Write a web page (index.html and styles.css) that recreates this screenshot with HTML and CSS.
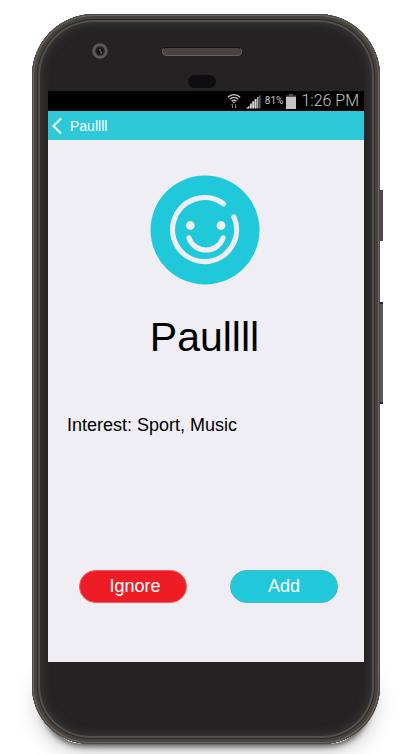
FILE: index.html
```html
<!DOCTYPE html>
<html lang="en">
<head>
<meta charset="utf-8">
<meta name="viewport" content="width=device-width, initial-scale=1">
<title>Paullll</title>
<link rel="stylesheet" href="styles.css">
</head>
<body>
<div class="phone">
  <span class="side-key side-key-power"></span>
  <span class="side-key side-key-volume"></span>
  <div class="bezel-top">
    <div class="hardware">
      <svg class="camera" width="16" height="16" viewBox="0 0 16 16" aria-hidden="true">
        <circle cx="8" cy="8" r="6.3" fill="#252323" stroke="#5a5a5c" stroke-width="3"/>
        <circle cx="8" cy="8" r="2.8" fill="#111"/>
        <path d="M8 6v2M9 8.500v2" stroke="#a5a273" stroke-width="1"/>
      </svg>
      <span class="speaker"></span>
    </div>
    <span class="sensor"></span>
  </div>
  <main class="screen">
    <div class="status">
      <svg width="14" height="16" viewBox="0 0 14 16" aria-hidden="true" fill="none" stroke="#c4c4c4" stroke-width="1.3">
        <path d="M.8 4.300C4.200.6 9.800.6 13.200 4.300M2.700 6.400c2.400-2.600 6.200-2.600 8.600 0M4.600 8.300c1.400-1.400 3.400-1.400 4.800 0"/>
        <circle cx="7" cy="9.500" r=".8" fill="#eee" stroke="none"/>
        <path d="M5.500 15v-4M4.300 12.200l1.200-1.300M8.500 11v4M9.700 13.800l-1.200 1.300" stroke="#777" stroke-width="1"/>
      </svg>
      <svg class="signal" width="15" height="15" viewBox="0 0 15 15" aria-hidden="true">
        <path d="M0 14.500h3.500v-3zM4 14.500h1.800v-5H4zM6.200 14.500h2V7.300h-2zM8.600 14.500h2V5h-2z" fill="#d8d8d8"/>
        <path d="M11 14.500h1.500V3H11z" fill="#aaa"/>
        <path d="M13 14.500h1.700V.5L13 2z" fill="#555"/>
      </svg>
      <span class="percent">81%</span>
      <svg class="battery" width="10" height="15" viewBox="0 0 10 15" aria-hidden="true">
        <path d="M3 0h4v1.500h3V15H0V1.500h3z" fill="#555"/>
        <path d="M0 3h10v12H0z" fill="#c4c4c4"/>
      </svg>
      <time class="clock">1:26 PM</time>
    </div>
    <header class="bar">
      <a class="back" href="#" aria-label="Back">
        <svg width="11" height="18" viewBox="0 0 11 18" aria-hidden="true"><path d="M9 1.500 1.500 9 9 16.500" fill="none" stroke="#fff" stroke-width="2"/></svg>
      </a>
      <span>Paullll</span>
    </header>
    <section class="profile">
      <svg class="avatar" width="110" height="110" viewBox="0 0 110 110" role="img" aria-label="Smiley">
        <circle cx="55" cy="55" r="54.500" fill="#1fc9da"/>
        <g fill="none" stroke="#efeef4" stroke-width="5.200" stroke-linecap="round">
          <path d="M73.500 28.800A32 32 0 1 0 84 42"/>
          <path d="M39 63C44.500 79 67.500 79 73 63"/>
        </g>
        <circle cx="40.300" cy="50.500" r="4.400" fill="#efeef4"/>
        <circle cx="71" cy="50.500" r="4.400" fill="#efeef4"/>
      </svg>
      <h1>Paullll</h1>
      <p>Interest: Sport, Music</p>
      <div class="actions">
        <button class="ignore" type="button">Ignore</button>
        <button class="add" type="button">Add</button>
      </div>
    </section>
  </main>
</div>
</body>
</html>
```
FILE: styles.css
```css
* {
  box-sizing: border-box;
}

body {
  margin: 0;
  padding: 14px 33px 10px 32px;
  background: #fff;
  font-family: "Liberation Sans", Arial, sans-serif;
}

.phone {
  position: relative;
  padding: 0 16px 82px;
  border-radius: 62px 62px 58px 58px;
  background: #242222;
  box-shadow:
    inset 0 0 0 1px #4c4945,
    inset 0 0 0 2px #6c6563,
    inset 0 0 0 5px #48433d,
    inset 0 0 0 6px #2c2925,
    inset 0 0 0 8px #50504f,
    inset 0 0 10px 10px #3a3a39;
}

/* Soft shadow the device casts on the page */
.phone::before {
  content: "";
  position: absolute;
  z-index: -1;
  inset: 650px 12px 0 12px;
  border-radius: 40px;
  box-shadow: 0 0 6px 2px #444, 0 0 24px 4px #bbb;
}

.side-key {
  position: absolute;
  left: 100%;
  width: 3px;
  background: #4c4946;
}

.side-key-power {
  top: 176px;
  height: 51px;
}

.side-key-volume {
  top: 288px;
  height: 102px;
  background: #5a5956;
  border: solid #2c2a28;
  border-width: 2px 0;
}

.bezel-top {
  display: flex;
  flex-direction: column;
  align-items: center;
  height: 77px;
  padding: 29px 8px 0 0;
}

.hardware {
  display: grid;
  grid-template-columns: 1fr 80px 1fr;
  align-items: center;
  width: 100%;
}

.camera {
  justify-self: center;
  margin-right: 10px;
}

.speaker {
  height: 9px;
  border: 1px solid #66605f;
  border-top-color: #111;
  border-radius: 5px;
  background: #484240;
}

.sensor {
  width: 28px;
  height: 13px;
  margin-top: 16px;
  border-radius: 7px;
  background: #0e0e12;
}

.screen {
  background: #efeef4;
}

.status {
  display: flex;
  align-items: center;
  justify-content: flex-end;
  height: 20px;
  padding-right: 5px;
  background: #000;
  color: #c6c6c6;
  font-family: Roboto, sans-serif;
  line-height: 16px;
}

.signal {
  margin-left: 5px;
}

.percent {
  margin-left: 4px;
  font-size: 10px;
}

.battery {
  margin-left: 3px;
}

.clock {
  margin-left: 5px;
  font-size: 16px;
  font-weight: 300;
}

.bar {
  display: flex;
  align-items: center;
  gap: 7px;
  height: 29px;
  padding-left: 4px;
  background: #2dc9d8;
  color: #fff;
  font-size: 14px;
  line-height: 16px;
}

.back {
  display: flex;
}

.profile {
  display: flex;
  flex-direction: column;
  padding: 35px 26px 59px 19px;
}

.avatar {
  align-self: center;
  margin-left: 4px;
}

h1 {
  margin: 28px 0 0;
  font-size: 41px;
  font-weight: 400;
  line-height: 48px;
  text-align: center;
  padding-left: 4px;
}

p {
  margin: 54px 0 0;
  font-size: 18px;
  line-height: 20px;
}

.actions {
  display: flex;
  justify-content: space-between;
  margin-top: 135px;
  padding-left: 12px;
}

button {
  width: 108px;
  height: 33px;
  padding: 0;
  border: 1px solid;
  border-radius: 17px;
  color: #fff;
  font-family: inherit;
  font-size: 18px;
}

.ignore {
  padding-left: 4px;
  border-color: #f25a60;
  background: #ee1c25;
}

.add {
  border-color: #45b8c6;
  background: #1fc9da;
}
```
